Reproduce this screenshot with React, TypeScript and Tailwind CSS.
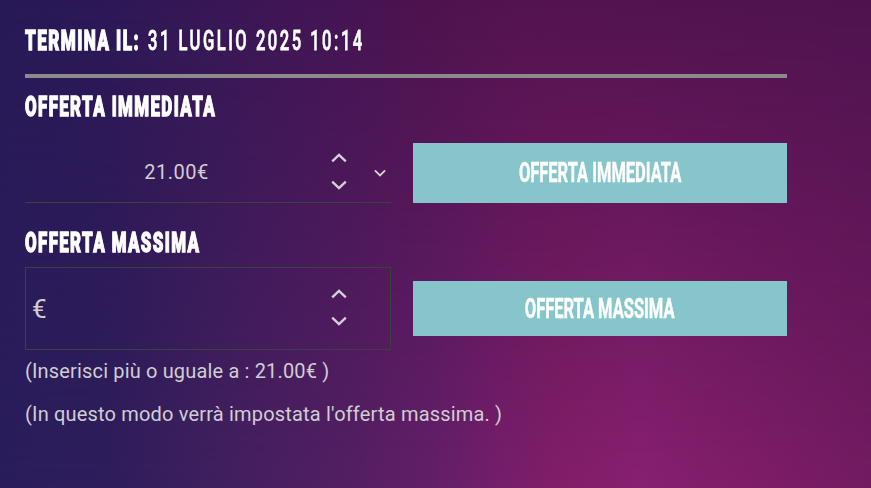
import { ReactNode } from 'react'

function Chevron({ up, small }: { up?: boolean; small?: boolean })
{
    return (
        <svg width={small ? 12 : 16} height={small ? 8 : 10} viewBox="0 0 16 10" fill="none" stroke="#d6d0d8" strokeWidth={small ? 2.5 : 2.3}>
            <path d={up ? 'M1.2 8.4 L8 1.8 L14.8 8.4' : 'M1.2 1.6 L8 8.2 L14.8 1.6'} />
        </svg>
    )
}

function Title({ children }: { children: ReactNode })
{
    return (
        <h3 className="h-7 origin-left scale-x-[0.626] whitespace-nowrap text-[27px] font-black leading-7 tracking-[2.2px] text-white [-webkit-text-stroke:1.3px_white]">
            {children}
        </h3>
    )
}

function BidButton({ label, className }: { label: string; className: string })
{
    return (
        <button className={`flex w-[374px] items-center justify-center bg-[#86c6cb] text-white ${className}`}>
            <span className="scale-x-[0.61] whitespace-nowrap text-[27px] font-bold leading-7 [-webkit-text-stroke:0.5px_white]">{label}</span>
        </button>
    )
}

export default function App()
{
    return (
        <div className="relative h-[488px] w-full overflow-hidden bg-[linear-gradient(92deg,#281957_0px,#2c1857_100px,#371755_200px,#421555_310px,#4d134f_420px,#541351_520px,#4f1350_871px)] pl-[25px] pt-[27px] font-['Roboto',sans-serif] text-[#d0ced3]">
            {/* Brighter glow that fades in towards the bottom */}
            <div className="absolute inset-0 bg-[linear-gradient(90deg,#2a1d5c_0px,#2e1d5b_110px,#40205f_220px,#541f63_350px,#621f68_430px,#751e6a_500px,#821e69_560px,#872070_640px,#7e1d68_750px,#731b62_871px)] mask-[linear-gradient(to_bottom,transparent,black)]"></div>

            <div className="relative w-[762px]">
                {/* End date */}
                <div className="flex h-7">
                    <div className="w-[122.5px]">
                        <h3 className="h-7 origin-left scale-x-[0.635] whitespace-nowrap text-[27px] font-black leading-7 tracking-[2.2px] text-white [-webkit-text-stroke:1.3px_white]">
                            TERMINA IL:
                        </h3>
                    </div>
                    <div className="h-7 w-[215px] origin-left scale-x-[0.613] whitespace-nowrap text-[27px] font-medium leading-7 tracking-[4.1px] text-white [-webkit-text-stroke:0.8px_white]">
                        31 LUGLIO 2025 10:14
                    </div>
                </div>

                <hr className="mt-[19px] border-0 border-t-4 border-[#8c8a8a]" />

                {/* Immediate bid */}
                <div className="mt-[15px]">
                    <Title>OFFERTA IMMEDIATA</Title>
                </div>
                <div className="mt-[22px] flex h-[60px] gap-[22px]">
                    <div className="flex w-[366px] items-center border-b border-[#3d4040] pb-0.5">
                        <span className="w-[306px] pr-[3px] text-center text-xl tracking-[0.5px]">21.00€</span>
                        <div className="flex flex-col gap-[17px]">
                            <Chevron up />
                            <Chevron />
                        </div>
                        <div className="ml-[27px] mt-[3px]">
                            <Chevron small />
                        </div>
                    </div>
                    <BidButton label="OFFERTA IMMEDIATA" className="h-[60px]" />
                </div>

                {/* Maximum bid */}
                <div className="mt-[26px]">
                    <Title>OFFERTA MASSIMA</Title>
                </div>
                <div className="mt-[10px] flex items-center gap-[22px]">
                    <div className="flex h-[83px] w-[366px] items-center border border-[#3d4040]">
                        <span className="w-[305px] pl-[6px] pt-px text-[26px]">€</span>
                        <div className="-mt-0.5 flex flex-col gap-[17px]">
                            <Chevron up />
                            <Chevron />
                        </div>
                    </div>
                    <BidButton label="OFFERTA MASSIMA" className="h-[55px]" />
                </div>

                {/* Notes */}
                <p className="mt-[7px] text-xl leading-7 tracking-[0.16px]">(Inserisci più o uguale a : 21.00€ )</p>
                <p className="mt-[15px] text-xl leading-7 tracking-[0.18px]">(In questo modo verrà impostata l'offerta massima. )</p>
            </div>
        </div>
    )
}
